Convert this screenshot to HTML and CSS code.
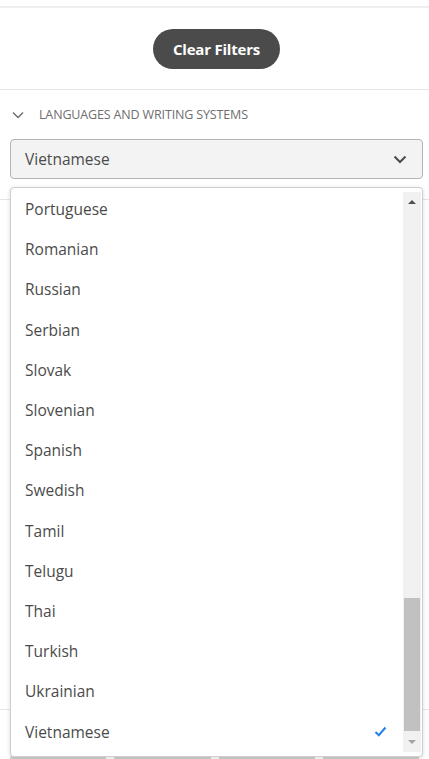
FILE: index.html
```html
<!DOCTYPE html>
<html>
<head>
<meta charset="utf-8">
<link rel="stylesheet" href="styles.css">
</head>
<body>
<div class="page">
  <div class="topbar"></div>
  <div class="clear-section">
    <button class="clear-btn">Clear Filters</button>
  </div>
  <div class="filter">
    <div class="filter-head">
      <svg class="head-chev" width="12" height="8" viewBox="0 0 12 8"><path d="M1 1.5 L6 6.5 L11 1.5" fill="none" stroke="#6e6e6e" stroke-width="1.5"/></svg>
      <span>LANGUAGES AND WRITING SYSTEMS</span>
    </div>
    <div class="select">
      <span>Vietnamese</span>
      <svg width="14" height="9" viewBox="0 0 14 9"><path d="M1.5 1.5 L7 7 L12.5 1.5" fill="none" stroke="#4b4b4b" stroke-width="2"/></svg>
    </div>
  </div>
  <div class="bg-block"></div>
  <div class="bg-bottom">
    <span class="seg"></span><span class="seg"></span><span class="seg"></span><span class="seg"></span>
  </div>

  <div class="dropdown">
    <ul class="options">
      <li>Portuguese</li>
      <li>Romanian</li>
      <li>Russian</li>
      <li>Serbian</li>
      <li>Slovak</li>
      <li>Slovenian</li>
      <li>Spanish</li>
      <li>Swedish</li>
      <li>Tamil</li>
      <li>Telugu</li>
      <li>Thai</li>
      <li>Turkish</li>
      <li>Ukrainian</li>
      <li class="selected">Vietnamese
        <svg class="check" width="13" height="11" viewBox="0 0 13 11"><path d="M1.5 6 L4.8 9.2 L11.5 1.5" fill="none" stroke="#2680eb" stroke-width="2"/></svg>
      </li>
    </ul>
    <div class="scrollbar">
      <div class="arrow up"></div>
      <div class="track"><div class="thumb"></div></div>
      <div class="arrow down"></div>
    </div>
  </div>
</div>
</body>
</html>
```
FILE: styles.css
```css
* { box-sizing: border-box; }
html, body { margin: 0; padding: 0; background: #fff; }
body {
  font-family: "Open Sans", "Noto Sans", sans-serif;
  color: #4b4b4b;
  width: 429px;
  height: 759px;
  overflow: hidden;
}
.page { position: relative; height: 759px; }
.topbar {
  height: 8px;
  border-bottom: 2px solid #efefef;
}
.clear-section {
  display: flex;
  justify-content: center;
  padding: 21px 0 20px 4px;
  border-bottom: 1px solid #e8e8e8;
}
.clear-btn {
  height: 40px;
  width: 127px;
  border: none;
  border-radius: 20px;
  background: #4b4b4b;
  color: #fff;
  font-family: "Open Sans", sans-serif;
  font-weight: 700;
  font-size: 15px;
  letter-spacing: -0.2px;
  padding: 0;
}
.filter { padding: 0 6px 0 10px; }
.filter-head {
  display: flex;
  align-items: center;
  height: 49px;
  font-size: 12.5px;
  color: #6e6e6e;
  letter-spacing: -0.15px;
}
.head-chev { margin: 0 15px 0 2px; }
.select {
  height: 40px;
  border: 1px solid #b3b3b3;
  border-radius: 4px;
  background: #f3f3f3;
  display: flex;
  align-items: center;
  justify-content: space-between;
  padding: 0 15px 0 14px;
  font-size: 15.5px;
  color: #4b4b4b;
}
.bg-block {
  height: 511px;
  margin-top: 20px;
  border-top: 1px solid #e6e6e6;
  border-bottom: 1px solid #e6e6e6;
}
.bg-bottom {
  display: flex;
  gap: 8px;
  padding: 46px 10px 0;
}
.seg { flex: 1; height: 4px; background: #d0d0d0; border-radius: 2px 2px 0 0; }
.dropdown {
  position: absolute;
  left: 10px;
  top: 187px;
  width: 413px;
  height: 570px;
  background: #fff;
  border: 1px solid #cfcfcf;
  border-radius: 4px;
  box-shadow: 0 1px 4px rgba(0,0,0,0.15);
  display: flex;
  overflow: hidden;
}
.options {
  list-style: none;
  margin: 0;
  padding: 1px 0 0;
  flex: 1;
}
.options li {
  height: 40.2px;
  display: flex;
  align-items: center;
  justify-content: space-between;
  padding: 0 16px 0 14px;
  font-size: 15.5px;
  color: #4b4b4b;
}
.scrollbar {
  width: 18px;
  margin: 4px 1px 4px 0;
  background: #f1f1f1;
  display: flex;
  flex-direction: column;
}
.arrow { height: 20px; display: flex; align-items: center; justify-content: center; }
.arrow.up::before {
  content: "";
  border-left: 4px solid transparent;
  border-right: 4px solid transparent;
  border-bottom: 4px solid #505050;
}
.arrow.down::before {
  content: "";
  border-left: 4px solid transparent;
  border-right: 4px solid transparent;
  border-top: 4px solid #a3a3a3;
}
.track { flex: 1; display: flex; flex-direction: column; justify-content: flex-end; padding: 0 1px 1px; }
.thumb { height: 133px; background: #c1c1c1; }
```
